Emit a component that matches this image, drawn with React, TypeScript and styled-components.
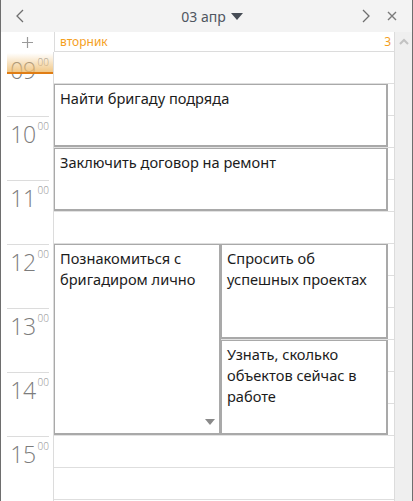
import React, {FC} from "react";
import styled, {createGlobalStyle} from "styled-components";

const GlobalStyle = createGlobalStyle`
	html, body {
		margin: 0;
		padding: 0;
		background: #ffffff;
	}
	* {
		box-sizing: border-box;
	}
`;

const SLOT = 32;
const HOURS = [9, 10, 11, 12, 13, 14, 15];

interface IEvent {
	id: number;
	title: string;
	rowStart: number;
	rowSpan: number;
	column: string;
	more?: boolean;
}

const events: IEvent[] = [
	{id: 1, title: "Найти бригаду подряда", rowStart: 2, rowSpan: 2, column: "1 / 3"},
	{id: 2, title: "Заключить договор на ремонт", rowStart: 4, rowSpan: 2, column: "1 / 3"},
	{id: 3, title: "Познакомиться с бригадиром лично", rowStart: 7, rowSpan: 6, column: "1 / 2", more: true},
	{id: 4, title: "Спросить об успешных проектах", rowStart: 7, rowSpan: 3, column: "2 / 3"},
	{id: 5, title: "Узнать, сколько объектов сейчас в работе", rowStart: 10, rowSpan: 3, column: "2 / 3"}
];

const Window = styled.div`
	width: 413px;
	height: 501px;
	display: flex;
	flex-direction: column;
	border-left: 1px solid #6e6e6e;
	border-right: 1px solid #6e6e6e;
	overflow: hidden;
	font-family: "Noto Sans", "Open Sans", sans-serif;
	background: #ffffff;
`;

const Toolbar = styled.div`
	height: 32px;
	flex-shrink: 0;
	display: flex;
	align-items: center;
	background: #f3f3f3;
	padding: 0 12px 0 11px;
`;

const IconButton = styled.button<{ $gap?: number }>`
	width: 16px;
	height: 20px;
	padding: 0;
	margin-left: ${p => p.$gap ?? 0}px;
	border: none;
	background: none;
	display: flex;
	align-items: center;
	justify-content: center;
	color: #6f6f6f;
`;

const Title = styled.div`
	flex: 1;
	display: flex;
	align-items: center;
	justify-content: center;
	gap: 5px;
	font-size: 14px;
	color: #4f5661;
	padding-left: 38px;
`;

const Body = styled.div`
	flex: 1;
	display: flex;
	min-height: 0;
`;

const Main = styled.div`
	width: 394px;
	display: flex;
	flex-direction: column;
	border-right: 1px solid #dcdcdc;
`;

const TopRow = styled.div`
	display: flex;
	height: 20px;
	flex-shrink: 0;
`;

const PlusCell = styled.div`
	width: 53px;
	display: flex;
	align-items: center;
	justify-content: center;
	padding-right: 1px;
	color: #9a9a9a;
`;

const DayHeader = styled.div`
	flex: 1;
	display: flex;
	align-items: center;
	justify-content: space-between;
	padding: 0 3px 0 5px;
	border-left: 1px solid #dcdcdc;
	border-bottom: 1px solid #dcdcdc;
	font-size: 12px;
	color: #f5a01e;
`;

const Schedule = styled.div`
	display: flex;
	flex: 1;
`;

const Gutter = styled.div`
	width: 53px;
	border-right: 1px solid #dcdcdc;
`;

const HourCell = styled.div<{ $first?: boolean }>`
	height: ${SLOT * 2}px;
	margin: 0 4px 0 6px;
	border-top: 1px solid ${p => (p.$first ? "transparent" : "#dcdcdc")};
	display: flex;
	justify-content: flex-end;
	padding-top: 3px;
	color: #7c7c7c;
	font-family: "Open Sans", sans-serif;
	font-weight: 300;
	position: relative;
`;

const HourNum = styled.span`
	font-size: 23px;
	line-height: 28px;
	letter-spacing: -0.5px;
`;

const HourMin = styled.span`
	font-size: 10px;
	line-height: 12px;
	margin-left: 2px;
	color: #8c8c8c;
`;

const NowMarker = styled.div`
	position: absolute;
	left: 0;
	right: -4px;
	top: 0;
	height: 21px;
	background: linear-gradient(to bottom, rgba(246, 214, 160, 0) 0%, rgba(238, 190, 115, 0.85) 100%);
	border-bottom: 2px solid #e07d14;
	z-index: 1;
`;

const HourLabel = styled.div`
	display: flex;
	position: relative;
	z-index: 0;
`;

const Grid = styled.div`
	flex: 1;
	display: grid;
	grid-template-columns: 167px 167px 6px;
	grid-template-rows: repeat(14, ${SLOT}px);
	background-image: repeating-linear-gradient(
		to bottom,
		transparent 0,
		transparent ${SLOT - 1}px,
		#dedede ${SLOT - 1}px,
		#dedede ${SLOT}px
	);
`;

const EventBox = styled.div<{ $row: number; $span: number; $col: string }>`
	grid-row: ${p => p.$row} / span ${p => p.$span};
	grid-column: ${p => p.$col};
	margin-bottom: 1px;
	background: #ffffff;
	border: 1px solid #a9a9a9;
	border-right-width: 2px;
	border-bottom-width: 2px;
	box-shadow: 0 1px 0 #e2e2e2;
	padding: 3px 5px;
	font-size: 14.6px;
	line-height: 21px;
	color: #1c1c1c;
	position: relative;
	z-index: 1;
`;

const MoreArrow = styled.div`
	position: absolute;
	right: 4px;
	bottom: 8px;
	width: 0;
	height: 0;
	border-left: 5px solid transparent;
	border-right: 5px solid transparent;
	border-top: 6px solid #8a8a8a;
`;

const Scrollbar = styled.div`
	width: 17px;
	background: #efefef;
	display: flex;
	justify-content: center;
	padding-top: 6px;
	color: #c2c2c2;
`;

const Chevron: FC<{ dir: "left" | "right" | "up" }> = ({dir}) => {
	const d = dir === "left" ? "M8 2 L2 8 L8 14" : dir === "right" ? "M2 2 L8 8 L2 14" : "M1 6 L5 2 L9 6";
	const h = dir === "up" ? 8 : 16;
	return (
		<svg width={10} height={h} viewBox={`0 0 10 ${h}`} style={{display: "block"}}>
			<path d={d} fill="none" stroke="currentColor" strokeWidth={dir === "up" ? 2 : 1.3} />
		</svg>
	);
};

export default function App() {
	return (
		<Window>
			<GlobalStyle />
			<Toolbar>
				<IconButton><Chevron dir="left" /></IconButton>
				<Title>
					<span>03 апр</span>
					<svg width="12" height="7" viewBox="0 0 12 7"><path d="M0 0 H12 L6 7 Z" fill="#464c55" /></svg>
				</Title>
				<IconButton><Chevron dir="right" /></IconButton>
				<IconButton $gap={10}>
					<svg width="10" height="10" viewBox="0 0 10 10">
						<path d="M1 1 L9 9 M9 1 L1 9" stroke="#7a7a7a" strokeWidth="1.4" />
					</svg>
				</IconButton>
			</Toolbar>
			<Body>
				<Main>
					<TopRow>
						<PlusCell>
							<svg width="11" height="11" viewBox="0 0 11 11">
								<path d="M5.5 0 V11 M0 5.5 H11" stroke="#9a9a9a" strokeWidth="1.2" />
							</svg>
						</PlusCell>
						<DayHeader>
							<span>вторник</span>
							<span>3</span>
						</DayHeader>
					</TopRow>
					<Schedule>
						<Gutter>
							{HOURS.map((h, i) => (
								<HourCell key={h} $first={i === 0}>
									{i === 0 && <NowMarker />}
									<HourLabel>
										<HourNum>{String(h).padStart(2, "0")}</HourNum>
										<HourMin>00</HourMin>
									</HourLabel>
								</HourCell>
							))}
						</Gutter>
						<Grid>
							{events.map(ev => (
								<EventBox key={ev.id} $row={ev.rowStart} $span={ev.rowSpan} $col={ev.column}>
									{ev.title}
									{ev.more && <MoreArrow />}
								</EventBox>
							))}
						</Grid>
					</Schedule>
				</Main>
				<Scrollbar>
					<Chevron dir="up" />
				</Scrollbar>
			</Body>
		</Window>
	);
}
